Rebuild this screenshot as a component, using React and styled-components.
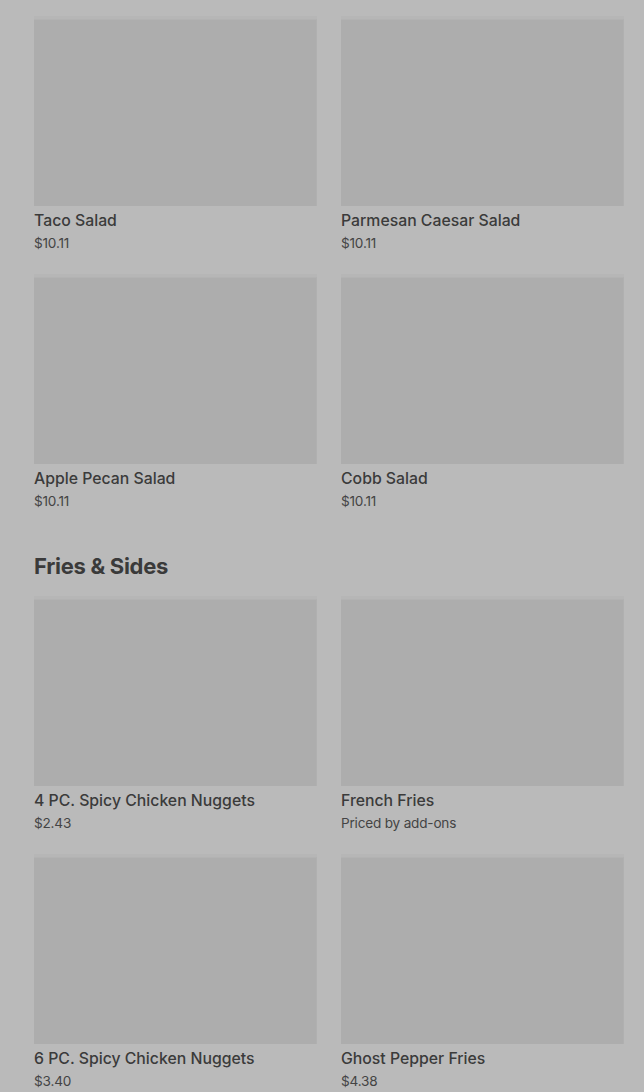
import React from "react";
import styled, { createGlobalStyle } from "styled-components";

const Global = createGlobalStyle`
  html, body { margin: 0; padding: 0; background: #bababa; }
  body { font-family: Inter, "Noto Sans", "Liberation Sans", sans-serif; -webkit-font-smoothing: antialiased; }
  * { box-sizing: border-box; }
`;

const Page = styled.div`
  width: 644px;
  height: 1092px;
  overflow: hidden;
  background: #bababa;
  padding: 19px 20px 0 34px;
`;

const Section = styled.section`
  display: flex;
  flex-direction: column;
  & + & { margin-top: 40px; }
`;

const Heading = styled.h2`
  margin: 0 0 17px;
  font-size: 22px;
  line-height: 32px;
  font-weight: 700;
  letter-spacing: -0.3px;
  color: #3a3a3a;
`;

const Grid = styled.div`
  display: grid;
  grid-template-columns: 283px 283px;
  column-gap: 24px;
  row-gap: 25px;
`;

const Card = styled.div`
  display: flex;
  flex-direction: column;
  cursor: pointer;
`;

const Thumb = styled.div`
  height: 187px;
  background: #adadad;
  box-shadow: 0 -3px 0 #b6b6b6;
  border-top: 1px solid #b2b2b2;
  border-right: 1px solid #b0b0b0;
`;

const Title = styled.div`
  margin-top: 5px;
  font-size: 15.8px;
  line-height: 20px;
  font-weight: 500;
  color: #3b3b3b;
  white-space: nowrap;
`;

const Price = styled.div`
  margin-top: 3px;
  font-size: 13.6px;
  line-height: 18px;
  font-weight: 400;
  color: #444;
  letter-spacing: -0.2px;
`;

const sections = [
  {
    title: null,
    items: [
      ["Taco Salad", "$10.11"],
      ["Parmesan Caesar Salad", "$10.11"],
      ["Apple Pecan Salad", "$10.11"],
      ["Cobb Salad", "$10.11"],
    ],
  },
  {
    title: "Fries & Sides",
    items: [
      ["4 PC. Spicy Chicken Nuggets", "$2.43"],
      ["French Fries", "Priced by add-ons"],
      ["6 PC. Spicy Chicken Nuggets", "$3.40"],
      ["Ghost Pepper Fries", "$4.38"],
    ],
  },
];

export default function App() {
  return (
    <>
      <Global />
      <Page>
        {sections.map((s, i) => (
          <Section key={i}>
            {s.title && <Heading>{s.title}</Heading>}
            <Grid>
              {s.items.map(([name, price]) => (
                <Card key={name}>
                  <Thumb />
                  <Title>{name}</Title>
                  <Price>{price}</Price>
                </Card>
              ))}
            </Grid>
          </Section>
        ))}
      </Page>
    </>
  );
}
